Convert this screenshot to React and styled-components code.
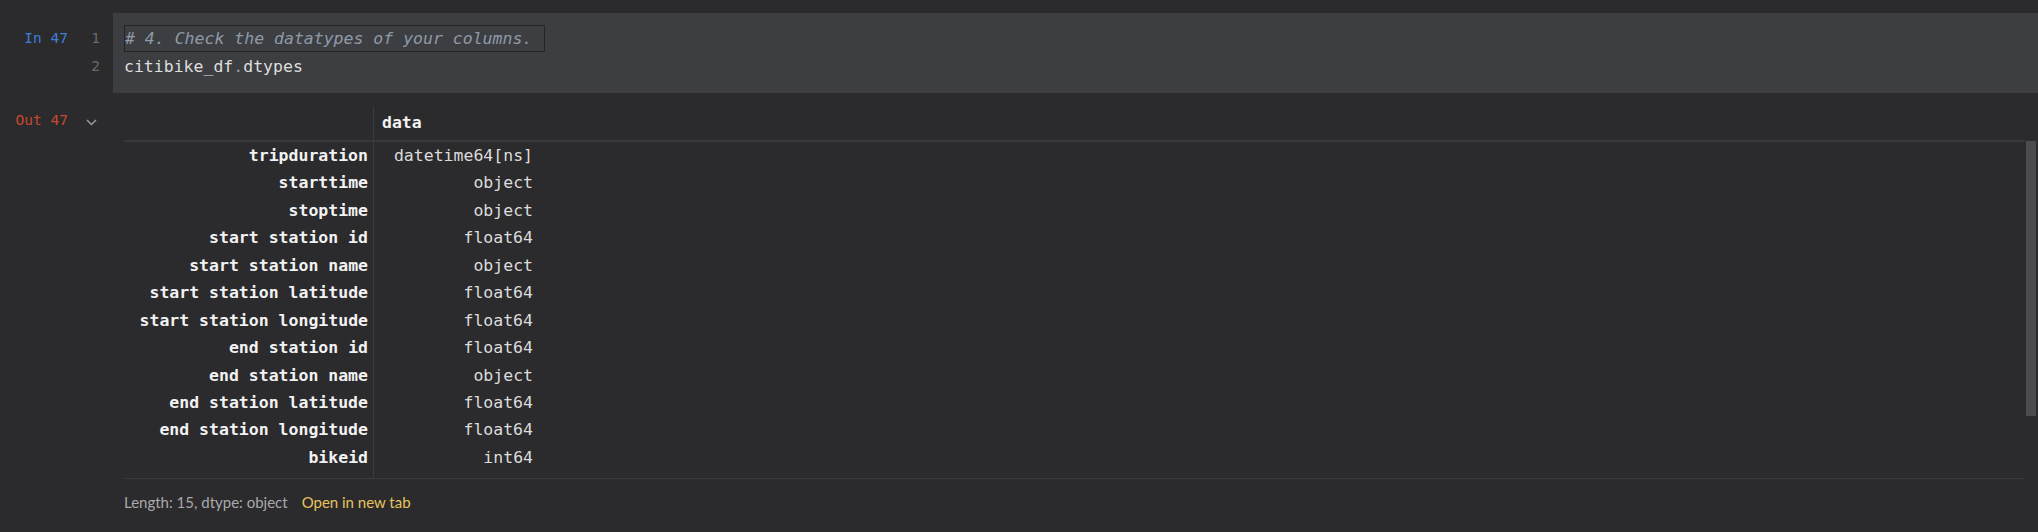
import styled, { createGlobalStyle } from "styled-components";

const rows = [
  ["tripduration", "datetime64[ns]"],
  ["starttime", "object"],
  ["stoptime", "object"],
  ["start station id", "float64"],
  ["start station name", "object"],
  ["start station latitude", "float64"],
  ["start station longitude", "float64"],
  ["end station id", "float64"],
  ["end station name", "object"],
  ["end station latitude", "float64"],
  ["end station longitude", "float64"],
  ["bikeid", "int64"],
];

const GlobalStyle = createGlobalStyle`
  body {
    margin: 0;
    background: #2b2a2d;
    font-family: "DejaVu Sans Mono", monospace;
  }
`;

const Page = styled.div`
  width: 2038px;
  height: 532px;
  padding-top: 13px;
  box-sizing: border-box;
  overflow: hidden;
`;

const InputCell = styled.div`
  display: flex;
`;

const Gutter = styled.div`
  width: ${(p) => p.width}px;
  flex-shrink: 0;
  display: flex;
  font-size: 14.5px;
`;

const Prompt = styled.div`
  width: 68px;
  text-align: right;
  color: ${(p) => (p.out ? "#c8492e" : "#3f7dd4")};
  line-height: ${(p) => (p.out ? "28px" : "27px")};
  padding-top: ${(p) => (p.out ? "0" : "12px")};
`;

const LineNumbers = styled.div`
  width: 32px;
  padding-top: 12px;
  text-align: right;
  color: #6a6a6c;
  div:first-child {
    line-height: 27px;
  }
  div:last-child {
    line-height: 28px;
  }
`;

const Chevron = styled.div`
  width: 56px;
  padding: 13px 0 0 18px;
  box-sizing: border-box;
  svg {
    display: block;
  }
`;

const Editor = styled.div`
  flex: 1;
  background: #3d3e41;
  padding: 12px 0 12px 11px;
  font-size: 16.5px;
  color: #dedede;
`;

const CodeLine = styled.div`
  line-height: 28px;
  white-space: pre;
`;

const Comment = styled.span`
  display: inline-block;
  line-height: 25px;
  border: 1px solid #252527;
  padding-right: 12px;
  font-style: italic;
  color: #8e9aa8;
`;

const Dot = styled.span`
  color: #9a9a9a;
`;

const OutputCell = styled.div`
  display: flex;
  margin-top: 13px;
`;

const Output = styled.div`
  flex: 1;
  display: flex;
  flex-direction: column;
`;

const Table = styled.div`
  border-bottom: 1px solid #3b3b3e;
  font-size: 16.5px;
`;

const HeaderRow = styled.div`
  display: flex;
  height: 34px;
  line-height: 34px;
  border-bottom: 2px solid #38383b;
`;

const Row = styled.div`
  display: flex;
  height: ${(p) => p.h}px;
  line-height: ${(p) => p.h}px;
`;

const IndexCell = styled.div`
  width: 250px;
  box-sizing: border-box;
  border-right: 1px solid #3c3c3f;
  padding-right: 5px;
  text-align: right;
  font-weight: bold;
  color: #f2f2f2;
  white-space: pre;
`;

const ValueCell = styled.div`
  width: 165px;
  box-sizing: border-box;
  padding: ${(p) => (p.head ? "0 0 0 8px" : "0 6px 0 0")};
  text-align: ${(p) => (p.head ? "left" : "right")};
  font-weight: ${(p) => (p.head ? "bold" : "normal")};
  color: ${(p) => (p.head ? "#f2f2f2" : "#dcdcdc")};
  white-space: pre;
`;

const Footer = styled.div`
  display: flex;
  gap: 14px;
  height: 46px;
  align-items: center;
  font-family: Lato, "Noto Sans", sans-serif;
  font-size: 15px;
  color: #a9a9ab;
`;

const Link = styled.span`
  color: #e8c35c;
`;

const ScrollTrack = styled.div`
  width: 13px;
  flex-shrink: 0;
  padding: 35px 0 0 1px;
  box-sizing: border-box;
`;

const Thumb = styled.div`
  width: 10px;
  height: 275px;
  background: #4c4b4e;
`;

export default function App() {
  return (
    <Page>
      <GlobalStyle />
      <InputCell>
        <Gutter width={113}>
          <Prompt>In 47</Prompt>
          <LineNumbers>
            <div>1</div>
            <div>2</div>
          </LineNumbers>
        </Gutter>
        <Editor>
          <CodeLine>
            <Comment># 4. Check the datatypes of your columns.</Comment>
          </CodeLine>
          <CodeLine>
            citibike_df<Dot>.</Dot>dtypes
          </CodeLine>
        </Editor>
      </InputCell>
      <OutputCell>
        <Gutter width={124}>
          <Prompt out>Out 47</Prompt>
          <Chevron>
            <svg width="11" height="7" viewBox="0 0 11 7">
              <polyline
                points="1,1 5.5,5.5 10,1"
                fill="none"
                stroke="#a0a0a2"
                strokeWidth="1.4"
              />
            </svg>
          </Chevron>
        </Gutter>
        <Output>
          <Table>
            <HeaderRow>
              <IndexCell />
              <ValueCell head>data</ValueCell>
            </HeaderRow>
            {rows.map(([name, type]) => (
              <Row key={name} h={27.45}>
                <IndexCell>{name}</IndexCell>
                <ValueCell>{type}</ValueCell>
              </Row>
            ))}
            <Row h={7}>
              <IndexCell />
            </Row>
          </Table>
          <Footer>
            <span>Length: 15, dtype: object</span>
            <Link>Open in new tab</Link>
          </Footer>
        </Output>
        <ScrollTrack>
          <Thumb />
        </ScrollTrack>
      </OutputCell>
    </Page>
  );
}
